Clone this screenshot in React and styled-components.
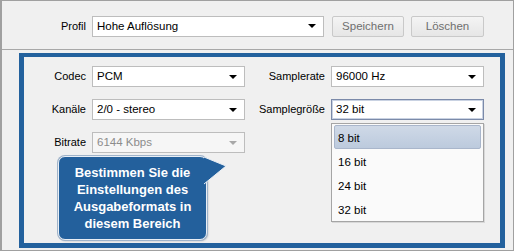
import React from "react";
import styled, { createGlobalStyle } from "styled-components";

const GlobalStyle = createGlobalStyle`
	html, body {
		margin: 0;
		padding: 0;
		background: #f0f0f0;
	}
	* {
		box-sizing: border-box;
	}
`;

const Window = styled.div`
	position: relative;
	width: 514px;
	height: 251px;
	background: #f0f0f0;
	border: 1px solid #a0a0a0;
	border-left-width: 2px;
	font-family: "Liberation Sans", Arial, sans-serif;
	font-size: 11px;
	color: #000;
	display: flex;
	flex-direction: column;
`;

const TopBar = styled.div`
	height: 49px;
	flex: none;
	display: flex;
	align-items: center;
	padding: 2px 0 0 0;
	border-bottom: 1px solid #a8a8a8;
`;

const Label = styled.span`
	width: ${(p) => p.$width}px;
	display: flex;
	justify-content: flex-end;
	white-space: nowrap;
	padding-right: 6px;
	flex: none;
`;

const SelectBox = styled.div`
	width: ${(p) => p.$width}px;
	height: ${(p) => p.$height || 21}px;
	flex: none;
	display: flex;
	align-items: center;
	justify-content: space-between;
	padding: 0 7px 0 4px;
	background: ${(p) => (p.$disabled ? "#f6f6f6" : "#fff")};
	border: 1px solid ${(p) => (p.$focused ? "#7b8aa9" : "#bdbdbd")};
	box-shadow: ${(p) => (p.$focused ? "inset 0 0 0 1px #c9d2e2" : "none")};
	color: ${(p) => (p.$disabled ? "#8c8c8c" : "#000")};
	font-size: 11.5px;
`;

const Arrow = styled.span`
	width: 0;
	height: 0;
	border-left: 4px solid transparent;
	border-right: 4px solid transparent;
	border-top: 4px solid ${(p) => (p.$disabled ? "#a8a8a8" : "#000")};
`;

const Button = styled.div`
	width: ${(p) => p.$width}px;
	height: 21px;
	margin-left: ${(p) => p.$gap}px;
	display: flex;
	align-items: center;
	justify-content: center;
	border: 1px solid #c9c9c9;
	border-radius: 2px;
	background: linear-gradient(#f4f4f4, #e6e6e6);
	color: #6f6f6f;
	font-size: 11.5px;
`;

const Content = styled.div`
	flex: 1;
	padding: 3px 8px 2px 17px;
	display: flex;
`;

const Frame = styled.div`
	position: relative;
	flex: 1;
	border: 5px solid #23619d;
	border-top-width: 4px;
	padding: 9px 0 0 0;
	display: grid;
	grid-template-columns: 238px 236px;
	grid-auto-rows: 33px;
	align-content: start;
`;

const Field = styled.div`
	display: flex;
	align-items: flex-start;
	height: 33px;
	line-height: 21px;
`;

const DropList = styled.div`
	position: absolute;
	left: 307px;
	top: 66px;
	width: 153px;
	height: 99px;
	background: #fafafa;
	border: 1px solid #a5a5a5;
	box-shadow: 1px 1px 0 #d8d8d8;
	padding: 1px 2px;
	font-size: 11.5px;
`;

const DropItem = styled.div`
	height: 24px;
	line-height: 24px;
	padding-left: 3px;
	border: 1px solid ${(p) => (p.$active ? "#a9b6cb" : "transparent")};
	border-radius: 2px;
	background: ${(p) =>
		p.$active ? "linear-gradient(#cfd9e7, #bccadd)" : "transparent"};
`;

const Callout = styled.div`
	position: absolute;
	left: 34px;
	top: 99px;
	width: 149px;
	height: 84px;
	background: #23609c;
	border: 1px solid #e8eef5;
	border-radius: 7px;
	box-shadow: 0 0 0 1px #9fb3c9, 1px 1px 2px rgba(0, 0, 0, 0.25);
	color: #fff;
	font-weight: bold;
	font-size: 13px;
	line-height: 17px;
	text-align: center;
	display: flex;
	align-items: center;
	justify-content: center;
	padding: 0 4px;
`;

const Tail = styled.svg`
	position: absolute;
	right: -22px;
	top: -1px;
`;

const fieldsLeft = [
	{ label: "Codec", value: "PCM" },
	{ label: "Kanäle", value: "2/0 - stereo" },
	{ label: "Bitrate", value: "6144 Kbps", disabled: true },
];

const fieldsRight = [
	{ label: "Samplerate", value: "96000 Hz" },
	{ label: "Samplegröße", value: "32 bit", focused: true },
];

const Select = ({ width, value, disabled, focused, height }) => (
	<SelectBox $width={width} $height={height} $disabled={disabled} $focused={focused}>
		<span>{value}</span>
		<Arrow $disabled={disabled} />
	</SelectBox>
);

const App = () => {
	const rows = [0, 1, 2];
	return (
		<>
			<GlobalStyle />
			<Window>
				<TopBar>
					<Label $width={90}>Profil</Label>
					<Select width={232} height={21} value="Hohe Auflösung" />
					<Button $width={72} $gap={8}>Speichern</Button>
					<Button $width={73} $gap={7}>Löschen</Button>
				</TopBar>
				<Content>
					<Frame>
						{rows.map((i) => (
							<React.Fragment key={i}>
								<Field>
									{fieldsLeft[i] && (
										<>
											<Label $width={68}>{fieldsLeft[i].label}</Label>
											<Select
												width={153}
												value={fieldsLeft[i].value}
												disabled={fieldsLeft[i].disabled}
											/>
										</>
									)}
								</Field>
								<Field>
									{fieldsRight[i] && (
										<>
											<Label $width={69}>{fieldsRight[i].label}</Label>
											<Select
												width={153}
												value={fieldsRight[i].value}
												focused={fieldsRight[i].focused}
											/>
										</>
									)}
								</Field>
							</React.Fragment>
						))}
						<DropList>
							<DropItem $active>8 bit</DropItem>
							<DropItem>16 bit</DropItem>
							<DropItem>24 bit</DropItem>
							<DropItem>32 bit</DropItem>
						</DropList>
						<Callout>
							<span>
								Bestimmen Sie die Einstellungen des Ausgabeformats in diesem
								Bereich
							</span>
							<Tail width="24" height="30" viewBox="0 0 24 30">
								<path d="M0 1 L22 10 L0 28 Z" fill="#23609c" />
								<path d="M0 1 L22 10 L0 28" fill="none" stroke="#e8eef5" strokeWidth="1" />
							</Tail>
						</Callout>
					</Frame>
				</Content>
			</Window>
		</>
	);
};

export default App;
